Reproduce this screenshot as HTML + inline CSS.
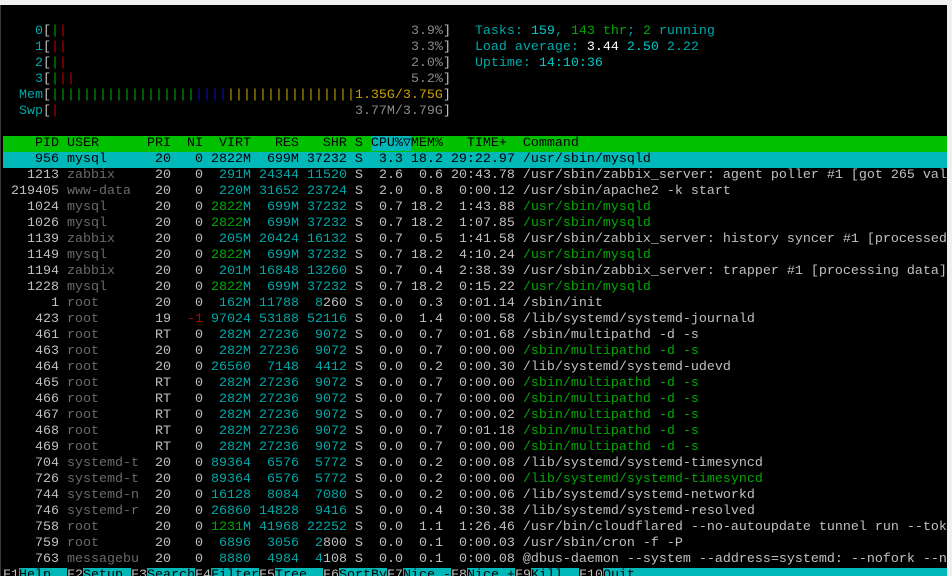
<!DOCTYPE html>
<html><head><meta charset="utf-8"><style>
html,body{margin:0;padding:0;background:#f0f0f0;width:952px;height:576px;overflow:hidden}
#term{position:absolute;left:0;top:5px;width:947px;height:571px;background:#000;border-left:1px solid #3a3a3a;box-sizing:border-box;overflow:hidden}
pre{position:absolute;left:2px;top:19px;margin:0;font-family:"Liberation Mono",monospace;font-size:13.33px;line-height:16px;color:#c0c0c0;white-space:pre;width:945px;overflow:hidden}
.t{color:#00a8a8}.g{color:#00a800}.u{color:#6a6a6a}.r{color:#c00000}.b{color:#1010b0}.y{color:#c8a000}.w{color:#fff}.d{color:#8a8a8a}.bt{color:#00c8c8}
.hdr{display:block;background:#00c000;color:#000}
.sel{display:block;background:#00b8b8;color:#000}
.cs{background:#00b8b8}
.tri{display:inline-block;width:8px;overflow:hidden;vertical-align:top}
.fk{color:#c0c0c0;background:#000}.fl{background:#00b8b8;color:#000}
.fb{display:block;background:#00b8b8}
</style></head><body><div id="term"><pre>    <span class="t">0</span>[<span class="g">|</span><span class="r">|</span>                                           <span class="d">3.9%</span>]   <span class="t">Tasks: </span><span class="bt">159</span><span class="t">, </span><span class="g">143 thr</span><span class="t">; </span><span class="g">2</span><span class="t"> running</span>
    <span class="t">1</span>[<span class="r">||</span>                                           <span class="d">3.3%</span>]   <span class="t">Load average: </span><span class="w">3.44 </span><span class="bt">2.50 </span><span class="t">2.22</span>
    <span class="t">2</span>[<span class="g">|</span><span class="r">|</span>                                           <span class="d">2.0%</span>]   <span class="t">Uptime: </span><span class="bt">14:10:36</span>
    <span class="t">3</span>[<span class="g">|</span><span class="r">||</span>                                          <span class="d">5.2%</span>]
  <span class="t">Mem</span>[<span class="g">||||||||||||||||||</span><span class="b">||||</span><span class="y">||||||||||||||||1.35G/3.75G</span>]
  <span class="t">Swp</span>[<span class="r">|</span>                                     <span class="d">3.77M/3.79G</span>]

<span class="hdr">    PID USER      PRI  NI  VIRT   RES   SHR S <span class="cs">CPU%<span class="tri">▽</span></span>MEM%   TIME+  Command                                                                                </span><span class="sel">    956 mysql      20   0 2822M  699M 37232 S  3.3 18.2 29:22.97 /usr/sbin/mysqld                                                                          </span>   1213 <span class="u">zabbix   </span>  20   0  <span class="t">291M</span> <span class="t">24344</span> <span class="t">11520</span> S  2.6  0.6 20:43.78 /usr/sbin/zabbix_server: agent poller #1 [got 265 values]
 219405 <span class="u">www-data </span>  20   0  <span class="t">220M</span> <span class="t">31652</span> <span class="t">23724</span> S  2.0  0.8  0:00.12 /usr/sbin/apache2 -k start
   1024 <span class="u">mysql    </span>  20   0 <span class="g">2822</span><span class="t">M</span>  <span class="t">699M</span> <span class="t">37232</span> S  0.7 18.2  1:43.88 <span class="g">/usr/sbin/mysqld</span>
   1026 <span class="u">mysql    </span>  20   0 <span class="g">2822</span><span class="t">M</span>  <span class="t">699M</span> <span class="t">37232</span> S  0.7 18.2  1:07.85 <span class="g">/usr/sbin/mysqld</span>
   1139 <span class="u">zabbix   </span>  20   0  <span class="t">205M</span> <span class="t">20424</span> <span class="t">16132</span> S  0.7  0.5  1:41.58 /usr/sbin/zabbix_server: history syncer #1 [processed
   1149 <span class="u">mysql    </span>  20   0 <span class="g">2822</span><span class="t">M</span>  <span class="t">699M</span> <span class="t">37232</span> S  0.7 18.2  4:10.24 <span class="g">/usr/sbin/mysqld</span>
   1194 <span class="u">zabbix   </span>  20   0  <span class="t">201M</span> <span class="t">16848</span> <span class="t">13260</span> S  0.7  0.4  2:38.39 /usr/sbin/zabbix_server: trapper #1 [processing data]
   1228 <span class="u">mysql    </span>  20   0 <span class="g">2822</span><span class="t">M</span>  <span class="t">699M</span> <span class="t">37232</span> S  0.7 18.2  0:15.22 <span class="g">/usr/sbin/mysqld</span>
      1 <span class="u">root     </span>  20   0  <span class="t">162M</span> <span class="t">11788</span>  <span class="t">8</span>260 S  0.0  0.3  0:01.14 /sbin/init
    423 <span class="u">root     </span>  19  <span class="r">-1</span> <span class="t">97024</span> <span class="t">53188</span> <span class="t">52116</span> S  0.0  1.4  0:00.58 /lib/systemd/systemd-journald
    461 <span class="u">root     </span>  RT   0  <span class="t">282M</span> <span class="t">27236</span>  <span class="t">9072</span> S  0.0  0.7  0:01.68 /sbin/multipathd -d -s
    463 <span class="u">root     </span>  20   0  <span class="t">282M</span> <span class="t">27236</span>  <span class="t">9072</span> S  0.0  0.7  0:00.00 <span class="g">/sbin/multipathd -d -s</span>
    464 <span class="u">root     </span>  20   0 <span class="t">26560</span>  <span class="t">7148</span>  <span class="t">4412</span> S  0.0  0.2  0:00.30 /lib/systemd/systemd-udevd
    465 <span class="u">root     </span>  RT   0  <span class="t">282M</span> <span class="t">27236</span>  <span class="t">9072</span> S  0.0  0.7  0:00.00 <span class="g">/sbin/multipathd -d -s</span>
    466 <span class="u">root     </span>  RT   0  <span class="t">282M</span> <span class="t">27236</span>  <span class="t">9072</span> S  0.0  0.7  0:00.00 <span class="g">/sbin/multipathd -d -s</span>
    467 <span class="u">root     </span>  RT   0  <span class="t">282M</span> <span class="t">27236</span>  <span class="t">9072</span> S  0.0  0.7  0:00.02 <span class="g">/sbin/multipathd -d -s</span>
    468 <span class="u">root     </span>  RT   0  <span class="t">282M</span> <span class="t">27236</span>  <span class="t">9072</span> S  0.0  0.7  0:01.18 <span class="g">/sbin/multipathd -d -s</span>
    469 <span class="u">root     </span>  RT   0  <span class="t">282M</span> <span class="t">27236</span>  <span class="t">9072</span> S  0.0  0.7  0:00.00 <span class="g">/sbin/multipathd -d -s</span>
    704 <span class="u">systemd-t</span>  20   0 <span class="t">89364</span>  <span class="t">6576</span>  <span class="t">5772</span> S  0.0  0.2  0:00.08 /lib/systemd/systemd-timesyncd
    726 <span class="u">systemd-t</span>  20   0 <span class="t">89364</span>  <span class="t">6576</span>  <span class="t">5772</span> S  0.0  0.2  0:00.00 <span class="g">/lib/systemd/systemd-timesyncd</span>
    744 <span class="u">systemd-n</span>  20   0 <span class="t">16128</span>  <span class="t">8084</span>  <span class="t">7080</span> S  0.0  0.2  0:00.06 /lib/systemd/systemd-networkd
    746 <span class="u">systemd-r</span>  20   0 <span class="t">26860</span> <span class="t">14828</span>  <span class="t">9416</span> S  0.0  0.4  0:30.38 /lib/systemd/systemd-resolved
    758 <span class="u">root     </span>  20   0 <span class="g">1231</span><span class="t">M</span> <span class="t">41968</span> <span class="t">22252</span> S  0.0  1.1  1:26.46 /usr/bin/cloudflared --no-autoupdate tunnel run --token
    759 <span class="u">root     </span>  20   0  <span class="t">6896</span>  <span class="t">3056</span>  <span class="t">2</span>800 S  0.0  0.1  0:00.03 /usr/sbin/cron -f -P
    763 <span class="u">messagebu</span>  20   0  <span class="t">8880</span>  <span class="t">4984</span>  <span class="t">4</span>108 S  0.0  0.1  0:00.08 @dbus-daemon --system --address=systemd: --nofork --nopidfile
<span class="fb"><span class="fk">F1</span><span class="fl">Help  </span><span class="fk">F2</span><span class="fl">Setup </span><span class="fk">F3</span><span class="fl">Search</span><span class="fk">F4</span><span class="fl">Filter</span><span class="fk">F5</span><span class="fl">Tree  </span><span class="fk">F6</span><span class="fl">SortBy</span><span class="fk">F7</span><span class="fl">Nice -</span><span class="fk">F8</span><span class="fl">Nice +</span><span class="fk">F9</span><span class="fl">Kill  </span><span class="fk">F10</span><span class="fl">Quit                                                                              </span></span></pre></div></body></html>
